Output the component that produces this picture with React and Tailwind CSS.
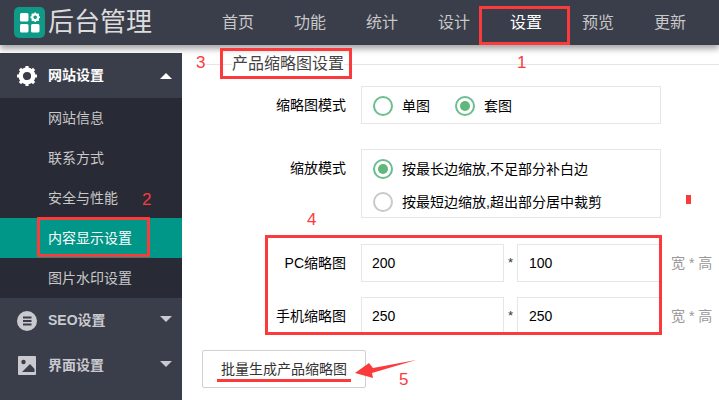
const cjk = { fontFamily: '"Liberation Sans", "Noto Sans CJK SC", sans-serif' };

const navItems = ["首页", "功能", "统计", "设计", "设置", "预览", "更新"];
const subItems = ["网站信息", "联系方式", "安全与性能", "内容显示设置", "图片水印设置"];

function Logo() {
  return (
    <svg width="31" height="31" viewBox="0 0 31 31" className="shrink-0">
      <rect width="31" height="31" rx="5" fill="#0e9a86" />
      <rect x="6" y="6" width="8.5" height="8.5" rx="1.5" fill="#fff" />
      <rect x="6" y="17" width="8.5" height="8.5" rx="1.5" fill="#fff" />
      <rect x="17" y="17" width="8.5" height="8.5" rx="1.5" fill="#fff" />
      <circle cx="21.2" cy="10.2" r="2.9" fill="none" stroke="#fff" strokeWidth="2.2" />
      <g stroke="#fff" strokeWidth="1.6">
        <path d="M21.2 5.4V7M21.2 13.4V15M16.4 10.2H18M24.4 10.2H26" />
        <path d="M17.8 6.8L19 8M23.4 12.4L24.6 13.6M17.8 13.6L19 12.4M23.4 8L24.6 6.8" />
      </g>
    </svg>
  );
}

function GearIcon() {
  return (
    <svg width="20" height="20" viewBox="0 0 20 20">
      <circle cx="10" cy="10" r="6.3" fill="none" stroke="#fff" strokeWidth="4.4" />
      <g stroke="#fff" strokeWidth="3.2">
        <path d="M10 0V3M10 17V20M0 10H3M17 10H20" />
        <path d="M2.9 2.9L5 5M15 15L17.1 17.1M2.9 17.1L5 15M15 5L17.1 2.9" />
      </g>
    </svg>
  );
}

function SeoIcon() {
  return (
    <svg width="20" height="20" viewBox="0 0 20 20">
      <circle cx="10" cy="10" r="10" fill="#c9c9cf" />
      <path d="M6 6.5H14.5M6 10H14.5M6 13.5H14.5" stroke="#3a3d4a" strokeWidth="1.8" />
    </svg>
  );
}

function PictureIcon() {
  return (
    <svg width="18" height="19" viewBox="0 0 18 19">
      <rect width="18" height="19" rx="1" fill="#c9c9cf" />
      <circle cx="5.5" cy="6" r="2.2" fill="#3a3d4a" />
      <path d="M4 16L12 8L16.5 13V16Z" fill="#3a3d4a" />
    </svg>
  );
}

function Caret({ up }) {
  return (
    <span
      className={
        up
          ? "w-0 h-0 border-x-[6px] border-x-transparent border-b-[6px] border-b-white"
          : "w-0 h-0 border-x-[6px] border-x-transparent border-t-[6px] border-t-[#c9c9cf] mb-[3px]"
      }
    />
  );
}

function Radio({ checked, muted, label }) {
  return (
    <div className="flex items-center gap-[9px]">
      <span
        className={
          "w-[20px] h-[20px] rounded-full border-2 flex items-center justify-center " +
          (muted ? "border-[#c9c9c9]" : "border-[#6cbd8f]")
        }
      >
        {checked && <span className="w-[10px] h-[10px] rounded-full bg-[#5fb878]" />}
      </span>
      <span className="text-[14px] text-black h-[20px] leading-[20px]">{label}</span>
    </div>
  );
}

function SizeRow({ label, w, h }) {
  return (
    <div className="flex items-center h-[38px]">
      <label className="w-[164px] text-right text-[14px] text-black shrink-0 pt-[1px]">{label}</label>
      <div className="w-[15px]" />
      <div className="w-[143px] h-[38px] border border-[#e6e6e6] flex items-center pl-[10px] pt-[1px] text-[14px] text-black">{w}</div>
      <div className="w-[13px] text-center text-[13px] text-[#333]">*</div>
      <div className="w-[144px] h-[38px] border border-[#e6e6e6] flex items-center pl-[11px] pt-[1px] text-[14px] text-black">{h}</div>
      <div className="ml-[10px] pt-[1px] text-[14px] text-[#999] whitespace-nowrap">宽 * 高</div>
    </div>
  );
}

export default function App() {
  return (
    <div className="relative w-[719px] h-[400px] overflow-hidden bg-white" style={cjk}>
      <header className="h-[45px] bg-[#3a3d4a] flex items-center shadow-[0_4px_6px_rgba(0,0,0,0.35)] relative z-10">
        <div className="w-[202px] flex items-center pl-[14px] gap-[3px]">
          <Logo />
          <span className="text-[26px] text-[#dcdcdc] whitespace-nowrap">后台管理</span>
        </div>
        <nav className="flex h-full">
          {navItems.map((item) => (
            <div
              key={item}
              className={
                "w-[72px] h-full flex items-center justify-center text-[16px] border-y-2 border-t-transparent " +
                (item === "设置" ? "text-white border-b-[#5fb878]" : "text-[#c8c8c8] border-b-transparent")
              }
            >
              {item}
            </div>
          ))}
        </nav>
      </header>

      <div className="flex pt-[8px]">
        <aside className="w-[182px] h-[347px] bg-[#3a3d4a] shrink-0 text-[14px]">
          <div className="h-[45px] flex items-center pl-[17px] pr-[10px] text-white font-bold">
            <GearIcon />
            <span className="ml-[11px] flex-1">网站设置</span>
            <Caret up />
          </div>
          <div className="bg-[#282a35]">
            {subItems.map((item) => (
              <div
                key={item}
                className={
                  "h-[40px] flex items-center pl-[48px] " +
                  (item === "内容显示设置" ? "bg-[#009688] text-white" : "text-[#c8c8c8]")
                }
              >
                {item}
              </div>
            ))}
          </div>
          <div className="h-[45px] flex items-center pl-[17px] pr-[10px] text-[#c9c9cf] font-bold">
            <SeoIcon />
            <span className="ml-[11px] flex-1">SEO设置</span>
            <Caret />
          </div>
          <div className="h-[45px] flex items-center pl-[18px] pr-[10px] text-[#c9c9cf] font-bold">
            <PictureIcon />
            <span className="ml-[12px] flex-1">界面设置</span>
            <Caret />
          </div>
        </aside>

        <main className="flex-1 min-w-0">
          <div className="relative h-[33px] flex">
            <div className="absolute left-[22px] right-0 top-[11px] h-px bg-[#e6e6e6]" />
            <div className="relative ml-[50px] h-[22px] bg-white text-[16px] text-[#444] leading-[22px]">产品缩略图设置</div>
          </div>

          <div className="flex items-center">
            <label className="w-[164px] text-right text-[14px] text-black shrink-0">缩略图模式</label>
            <div className="ml-[15px] w-[300px] h-[38px] border border-[#e6e6e6] flex items-center pl-[11px] pt-[1px] gap-[25px]">
              <Radio label="单图" />
              <Radio checked label="套图" />
            </div>
          </div>

          <div className="flex items-start mt-[25px]">
            <label className="w-[164px] text-right text-[14px] text-black shrink-0 mt-[9px]">缩放模式</label>
            <div className="ml-[15px] w-[300px] h-[69px] border border-[#e6e6e6] flex flex-col gap-[13px] pl-[11px] pt-[9px]">
              <Radio checked label="按最长边缩放,不足部分补白边" />
              <Radio muted label="按最短边缩放,超出部分居中裁剪" />
            </div>
          </div>

          <div className="mt-[26px] flex flex-col gap-[15px]">
            <SizeRow label="PC缩略图" w="200" h="100" />
            <SizeRow label="手机缩略图" w="250" h="250" />
          </div>

          <button className="mt-[15px] ml-[20px] w-[164px] h-[38px] border border-[#d0d0d0] rounded-[2px] pt-[1px] text-[14px] text-[#333]">
            批量生成产品缩略图
          </button>
        </main>
      </div>

      {/* red annotations over the screenshot */}
      <div className="absolute left-[479px] top-[6px] w-[91px] h-[39px] border-[3px] border-[#fb3b3b] z-20" />
      <div className="absolute left-[37px] top-[217px] w-[113px] h-[40px] border-[3px] border-[#fb3b3b] z-20" />
      <div className="absolute left-[220px] top-[48px] w-[132px] h-[31px] border-[3px] border-[#fb3b3b] z-20" />
      <div className="absolute left-[265px] top-[235px] w-[397px] h-[100px] border-[3px] border-[#fb3b3b] z-20" />
      <div className="absolute left-[217px] top-[379px] w-[134px] h-[3px] bg-[#fb3b3b] z-20" />
      <div className="absolute left-[686px] top-[195px] w-[5px] h-[9px] bg-[#fb3b3b] z-20" />
      <span className="absolute left-[196px] top-[50px] text-[17px] text-[#fb3b3b] z-20">3</span>
      <span className="absolute left-[517px] top-[50px] text-[17px] text-[#fb3b3b] z-20">1</span>
      <span className="absolute left-[142px] top-[187px] text-[17px] text-[#fb3b3b] z-20">2</span>
      <span className="absolute left-[307px] top-[207px] text-[17px] text-[#fb3b3b] z-20">4</span>
      <span className="absolute left-[399px] top-[367px] text-[17px] text-[#fb3b3b] z-20">5</span>
      <svg className="absolute left-[350px] top-[355px] z-20" width="70" height="30" viewBox="0 0 70 30">
        <path d="M66 5L23 13L19 8L5 18L23 23L22 18Z" fill="#fb3b3b" />
      </svg>
    </div>
  );
}
